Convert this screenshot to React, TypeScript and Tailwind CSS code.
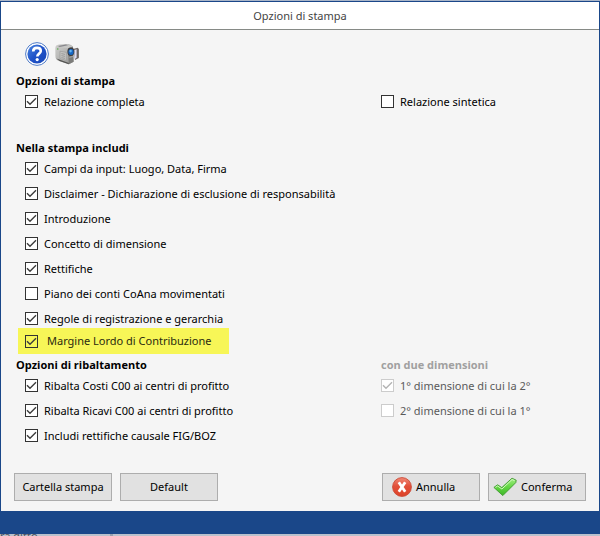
import { useState } from 'react';
import type { ReactNode } from 'react';
import clsx from 'clsx';

const includeItems = [
  { id: 'campi', label: 'Campi da input: Luogo, Data, Firma', checked: true },
  { id: 'disclaimer', label: 'Disclaimer - Dichiarazione di esclusione di responsabilità', checked: true },
  { id: 'introduzione', label: 'Introduzione', checked: true },
  { id: 'concetto', label: 'Concetto di dimensione', checked: true },
  { id: 'rettifiche', label: 'Rettifiche', checked: true },
  { id: 'piano', label: 'Piano dei conti CoAna movimentati', checked: false },
  { id: 'regole', label: 'Regole di registrazione e gerarchia', checked: true },
];

const transferItems = [
  { id: 'costi', label: 'Ribalta Costi C00 ai centri di profitto', checked: true },
  { id: 'ricavi', label: 'Ribalta Ricavi C00 ai centri di profitto', checked: true },
  { id: 'causale', label: 'Includi rettifiche causale FIG/BOZ', checked: true },
];

const dimensionItems = [
  { id: 'dim1', label: '1° dimensione di cui la 2°', checked: true },
  { id: 'dim2', label: '2° dimensione di cui la 1°', checked: false },
];

type CheckProps = {
  id: string;
  label: string;
  checked: boolean;
  disabled?: boolean;
  highlight?: boolean;
};

function Check({ id, label, checked: initial, disabled, highlight }: CheckProps) {
  const [checked, setChecked] = useState(initial);

  return (
    <div className={clsx('flex items-center', highlight ? 'h-[26px] gap-[9px]' : 'h-[19px] gap-1.5')}>
      <span className="grid shrink-0">
        <input
          id={id}
          type="checkbox"
          checked={checked}
          disabled={disabled}
          onChange={(e) => setChecked(e.target.checked)}
          className={clsx(
            'col-start-1 row-start-1 size-[13px] appearance-none border',
            disabled ? 'border-[#cccccc]' : 'border-[#333333]',
            highlight ? 'bg-[#f7f657]' : 'bg-white'
          )}
        />
        {checked && (
          <svg
            viewBox="0 0 13 13"
            className={clsx(
              'pointer-events-none col-start-1 row-start-1 size-[13px]',
              disabled ? 'text-[#b4b4b4]' : 'text-[#3c3c3c]'
            )}
            fill="none"
            stroke="currentColor"
            strokeWidth="1.4"
          >
            <path d="M2 6.3 5 9.3 11 3.3" />
          </svg>
        )}
      </span>
      <label
        htmlFor={id}
        className={clsx('whitespace-nowrap', disabled ? 'text-[#5a5a5a]' : highlight ? 'text-[#2a2a10]' : 'text-black')}
      >
        {label}
      </label>
    </div>
  );
}

function Heading({ children, muted }: { children: ReactNode; muted?: boolean }) {
  return (
    <h2
      className={clsx(
        "mb-px h-5 font-['Open_Sans',sans-serif] font-bold leading-5",
        muted ? 'text-[#a0a0a0]' : 'text-black'
      )}
    >
      {children}
    </h2>
  );
}

function DialogButton({ children, className = 'justify-center' }: { children: ReactNode; className?: string }) {
  return (
    <button
      type="button"
      className={clsx(
        'flex h-7 w-[98px] items-center border border-[#adadad] bg-[#e1e1e1] text-black hover:bg-[#e5f1fb]',
        className
      )}
    >
      {children}
    </button>
  );
}

function HelpIcon() {
  return (
    <svg viewBox="0 0 24 24" className="size-6">
      <defs>
        <linearGradient id="help" x1="0" y1="0" x2="1" y2="1">
          <stop offset="0" stopColor="#4a86e0" />
          <stop offset="0.5" stopColor="#1f52c8" />
          <stop offset="1" stopColor="#1747b8" />
        </linearGradient>
      </defs>
      <circle cx="12" cy="12" r="11.4" fill="#fff" stroke="#4f7cc8" strokeWidth="1" />
      <circle cx="12" cy="12" r="9.6" fill="url(#help)" />
      <path
        d="M8.2 9.4C8.2 7 9.8 5.9 12 5.9s3.8 1.1 3.8 3.1c0 2.6-3.5 2.7-3.5 5.5"
        fill="none"
        stroke="#fff"
        strokeWidth="2.6"
      />
      <circle cx="12.2" cy="17.6" r="1.6" fill="#fff" />
    </svg>
  );
}

function CameraIcon() {
  return (
    <svg viewBox="0 0 24 24" className="size-6">
      <defs>
        <linearGradient id="camera" x1="0" y1="0" x2="1" y2="1">
          <stop offset="0" stopColor="#cfcfcd" />
          <stop offset="0.6" stopColor="#b0b0ae" />
          <stop offset="1" stopColor="#8a8a88" />
        </linearGradient>
      </defs>
      <path d="M18 7l4.6-1.2 1.3 1.2v9L20 18z" fill="#6f6866" />
      <path d="M19.4 8l2.2-.8v8.6l-2.2 1.4z" fill="#dddcf2" />
      <path
        d="M.3 6.4C.3 3.8 1.6 3 4 2.6L12 2c2 0 3.8.6 6 2.4l.6 15.4-4.8 2.4L4.2 19C1.2 18 .4 16.8.4 14z"
        fill="url(#camera)"
      />
      <path d="M1.6 5.2C3 3.4 6 3.2 12.4 2.4l5.2 2.2-5.2 1.6z" fill="#c6c6c4" />
      <path d="M3 4l8-1.4 2 .6-8.4 1.8z" fill="#85858a" />
      <path d="M13 6.8l5-2 .6 15-4.8 2.4z" fill="#7c7c7a" />
      <path d="M1.4 16.4l3 2.6 9.4 3.2v-1.1L4.4 17.6z" fill="#555553" />
      <path d="M5 9.2l6.4 1.2v8L5 16.6z" fill="#c2c2c0" stroke="#979795" strokeWidth="0.6" />
      <path d="M6.4 11.6l3.6.8M6.4 13.6l3.6.8M6.4 15.6l3.6.8" stroke="#8b8b89" strokeWidth="0.7" />
      <circle cx="2.8" cy="7" r="0.7" fill="#48a83a" />
      <ellipse cx="15.8" cy="9.8" rx="3.4" ry="4.2" fill="#3a3a3e" />
      <ellipse cx="16" cy="10" rx="2.6" ry="3" fill="#1767c4" />
      <ellipse cx="15.6" cy="9.1" rx="1.2" ry="1.3" fill="#62b4f2" />
      <path d="M14.4 15.4l3.4-1" stroke="#b4b4b2" strokeWidth="0.8" />
    </svg>
  );
}

function CancelIcon() {
  return (
    <svg viewBox="0 0 20 20" className="size-5">
      <defs>
        <linearGradient id="cancel" x1="0" y1="0" x2="0" y2="1">
          <stop offset="0" stopColor="#f08a78" />
          <stop offset="0.45" stopColor="#e2503a" />
          <stop offset="1" stopColor="#dd4228" />
        </linearGradient>
      </defs>
      <circle cx="10" cy="10" r="9.4" fill="url(#cancel)" stroke="#cc4a36" strokeWidth="0.9" />
      <path d="M6.8 5.2 13.2 14.8M13.2 5.2 6.8 14.8" stroke="#fff" strokeWidth="2.8" />
    </svg>
  );
}

function ConfirmIcon() {
  return (
    <svg viewBox="0 0 24 20" className="h-5 w-6">
      <defs>
        <linearGradient id="confirm" x1="0" y1="0" x2="0" y2="1">
          <stop offset="0" stopColor="#a4ee86" />
          <stop offset="0.5" stopColor="#62d742" />
          <stop offset="1" stopColor="#3fb52a" />
        </linearGradient>
      </defs>
      <path
        d="M.9 10.4 4.6 7.8 8.8 10.6 19 1.2 23.2 3.2 22.8 5.6 9.8 18.6z"
        fill="url(#confirm)"
        stroke="#3f9a30"
        strokeLinejoin="round"
        strokeWidth="0.9"
      />
      <path d="M2.4 10.4 4.6 9 8.9 12 19.1 2.5 21.6 3.7" fill="none" stroke="#d0fabc" strokeWidth="1" />
    </svg>
  );
}

export default function App() {
  return (
    <div className="flex min-h-screen flex-col bg-[#a9b5c8] pt-px font-['Noto_Sans',sans-serif] text-[11px] leading-4">
      <div className="flex flex-1 flex-col border-x border-t border-[#1a4789] bg-[#1a4789]">
        <header className="flex h-7 items-center justify-center border-b border-[#868a86] bg-white">
          <h1 className="text-[#444444]">Opzioni di stampa</h1>
        </header>

        <main className="bg-[#f5f5f5] px-[13px] pt-3 pb-2.5">
          <div className="mb-[5px] flex gap-1.5 pl-[11px]">
            <button type="button" aria-label="Aiuto">
              <HelpIcon />
            </button>
            <button type="button" aria-label="Video">
              <CameraIcon />
            </button>
          </div>

          <section className="pl-0.5">
            <Heading>Opzioni di stampa</Heading>
            <div className="grid grid-cols-[365fr_205fr]">
              <div className="pl-[9px]">
                <Check id="completa" label="Relazione completa" checked />
              </div>
              <Check id="sintetica" label="Relazione sintetica" checked={false} />
            </div>
          </section>

          <section className="mt-[27px] pl-0.5">
            <Heading>Nella stampa includi</Heading>
            <div className="flex flex-col gap-1.5 pl-[9px]">
              {includeItems.map((item) => (
                <Check key={item.id} {...item} />
              ))}
            </div>
            <div className="ml-0.5 w-[211px] bg-[#f7f657] pl-[7px]">
              <Check id="margine" label="Margine Lordo di Contribuzione" checked highlight />
            </div>
          </section>

          <div className="mt-px grid grid-cols-[365fr_205fr] pl-0.5">
            <section>
              <Heading>Opzioni di ribaltamento</Heading>
              <div className="flex flex-col gap-1.5 pl-[9px]">
                {transferItems.map((item) => (
                  <Check key={item.id} {...item} />
                ))}
              </div>
            </section>
            <section>
              <Heading muted>con due dimensioni</Heading>
              <div className="flex flex-col gap-1.5">
                {dimensionItems.map((item) => (
                  <Check key={item.id} {...item} disabled />
                ))}
              </div>
            </section>
          </div>

          <footer className="mt-7 flex justify-between">
            <div className="flex gap-2">
              <DialogButton>Cartella stampa</DialogButton>
              <DialogButton>Default</DialogButton>
            </div>
            <div className="flex gap-2">
              <DialogButton className="gap-1 pl-[9px]">
                <CancelIcon />
                Annulla
              </DialogButton>
              <DialogButton className="gap-1 pl-1">
                <ConfirmIcon />
                Conferma
              </DialogButton>
            </div>
          </footer>
        </main>
      </div>

      {/* edge of the window behind the dialog */}
      <div className="flex h-0.5 overflow-hidden bg-[#b9c1cd] text-[#4c5360]">
        <span className="-mt-1.5 w-[110px] shrink-0">ra ditto</span>
        <span className="w-[3px] bg-[#98a0ae]" />
      </div>
    </div>
  );
}
